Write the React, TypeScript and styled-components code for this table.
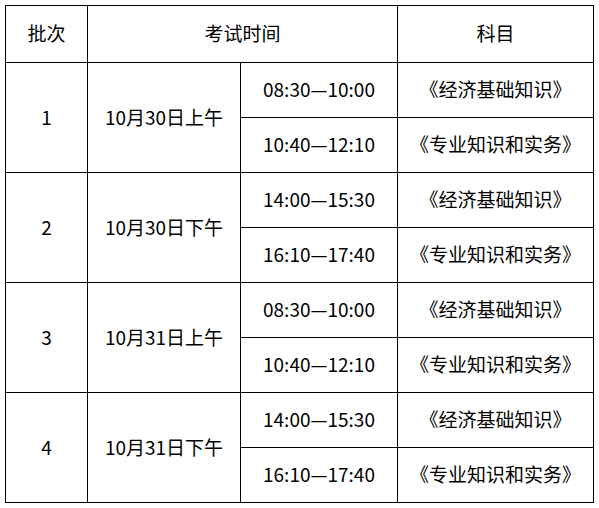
import React from "react";
import styled, { createGlobalStyle } from "styled-components";

const Global = createGlobalStyle`
  html, body { margin: 0; padding: 0; background: #fff; }
  body { font-family: "Noto Sans CJK SC", "Noto Sans", sans-serif; color: #000; }
`;

const Page = styled.div`
  padding: 5px;
`;

const Grid = styled.div`
  display: grid;
  grid-template-columns: 81px 152px 156px 195px;
  grid-template-rows: 56px repeat(8, 54px);
  gap: 1px;
  padding: 1px;
  background: #000;
  width: max-content;
`;

const Cell = styled.div<{ $col?: string; $row?: string }>`
  background: #fff;
  display: flex;
  align-items: center;
  justify-content: center;
  font-size: 19px;
  line-height: 1;
  padding-bottom: 3px;
  box-sizing: border-box;
  white-space: nowrap;
  ${(p) => (p.$col ? `grid-column: ${p.$col};` : "")}
  ${(p) => (p.$row ? `grid-row: ${p.$row};` : "")}
`;

const batches = [
  { n: "1", date: "10月30日上午", t1: "08:30—10:00", t2: "10:40—12:10" },
  { n: "2", date: "10月30日下午", t1: "14:00—15:30", t2: "16:10—17:40" },
  { n: "3", date: "10月31日上午", t1: "08:30—10:00", t2: "10:40—12:10" },
  { n: "4", date: "10月31日下午", t1: "14:00—15:30", t2: "16:10—17:40" },
];

export default function App() {
  return (
    <Page>
      <Global />
      <Grid>
        <Cell $col="1" $row="1">批次</Cell>
        <Cell $col="2 / span 2" $row="1">考试时间</Cell>
        <Cell $col="4" $row="1">科目</Cell>
        {batches.map((b, i) => {
          const r = 2 + i * 2;
          return (
            <React.Fragment key={i}>
              <Cell $col="1" $row={`${r} / span 2`}>{b.n}</Cell>
              <Cell $col="2" $row={`${r} / span 2`}>{b.date}</Cell>
              <Cell $col="3" $row={`${r}`}>{b.t1}</Cell>
              <Cell $col="4" $row={`${r}`}>《经济基础知识》</Cell>
              <Cell $col="3" $row={`${r + 1}`}>{b.t2}</Cell>
              <Cell $col="4" $row={`${r + 1}`}>《专业知识和实务》</Cell>
            </React.Fragment>
          );
        })}
      </Grid>
    </Page>
  );
}
